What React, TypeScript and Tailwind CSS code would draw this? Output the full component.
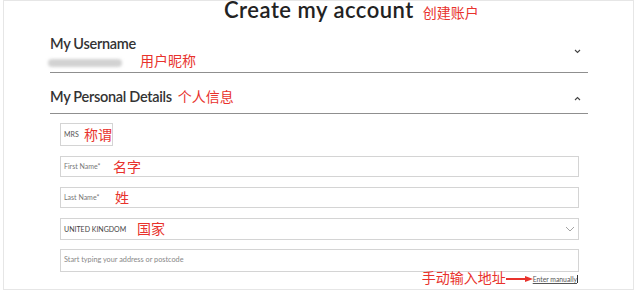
const Chevron = ({ up = false }: { up?: boolean }) => (
  <svg width="7" height="5" viewBox="0 0 7 5" className="block">
    <polyline
      points={up ? '1,4 3.5,1.5 6,4' : '1,1 3.5,3.5 6,1'}
      fill="none"
      stroke="#444"
      strokeWidth="1.1"
    />
  </svg>
)

const Note = ({ children, className = '' }: { children: React.ReactNode; className?: string }) => (
  <span className={`text-[14px] leading-[14px] text-[#e8322c] whitespace-nowrap ${className}`}>{children}</span>
)

export default function App() {
  return (
    <div className="w-[644px] h-[291px] bg-white overflow-hidden font-[family-name:Lato,'Noto_Sans_CJK_SC',sans-serif]">
      <div className="ml-[3px] w-[631px] h-[290px] border border-[#e6e6e6] flex flex-col">
        {/* title */}
        <div className="flex items-baseline h-[18px] ml-[220px]">
          <h1 className="text-[22px] leading-[18px] font-semibold tracking-[0.5px] text-[#222] whitespace-nowrap">
            Create my account
          </h1>
          <Note className="ml-[9px]">创建账户</Note>
        </div>

        <div className="ml-[46px] w-[538px] flex flex-col">
          {/* username */}
          <div className="mt-[15px] flex justify-between items-start h-[20px]">
            <h2 className="text-[14.5px] leading-[20px] font-semibold tracking-[-0.3px] text-[#333]">My Username</h2>
            <div className="mt-[15px] mr-[7px]">
              <Chevron />
            </div>
          </div>
          <div className="flex items-center h-[14px]">
            <div className="ml-[-2px] w-[74px] h-[8px] mt-[4px] rounded-full bg-[#d2d2d2] blur-[1.5px]" />
            <Note className="ml-[18px]">用户昵称</Note>
          </div>
          <div className="mt-[4px] h-px bg-[#8f8f8f]" />

          {/* personal details */}
          <div className="mt-[14px] flex justify-between items-start h-[20px]">
            <div className="flex items-baseline">
              <h2 className="text-[14.5px] leading-[20px] font-semibold tracking-[-0.3px] text-[#333]">
                My Personal Details
              </h2>
              <Note className="ml-[6px]">个人信息</Note>
            </div>
            <div className="mt-[9px] mr-[7px]">
              <Chevron up />
            </div>
          </div>
          <div className="mt-[6px] h-px bg-[#8f8f8f]" />

          {/* fields */}
          <div className="ml-[10px] w-[519px] flex flex-col">
            <div className="mt-[9px] w-[53px] h-[23px] border border-[#d4d4d4] flex items-center pl-[3px]">
              <span className="w-[21px] text-[7px] text-[#555]">MRS</span>
              <Note>称谓</Note>
            </div>
            <div className="mt-[10px] h-[21px] border border-[#d4d4d4] flex items-center pl-[3px]">
              <span className="w-[49px] text-[7px] text-[#777]">First Name*</span>
              <Note>名字</Note>
            </div>
            <div className="mt-[10px] h-[21px] border border-[#d4d4d4] flex items-center pl-[3px]">
              <span className="w-[51px] text-[7px] text-[#777]">Last Name*</span>
              <Note>姓</Note>
            </div>
            <div className="mt-[10px] h-[22px] border border-[#d4d4d4] flex items-center pl-[3px] pr-[3px]">
              <span className="w-[73px] text-[7px] text-[#444]">UNITED KINGDOM</span>
              <Note>国家</Note>
              <svg width="10" height="6" viewBox="0 0 10 6" className="ml-auto">
                <polyline points="1,1 5,5 9,1" fill="none" stroke="#999" strokeWidth="0.9" />
              </svg>
            </div>
            <div className="mt-[9px] h-[23px] border border-[#d4d4d4] flex items-center pl-[3px]">
              <span className="text-[7.3px] text-[#888]">Start typing your address or postcode</span>
            </div>
            <div className="h-[14px] flex justify-end items-center pr-[1px]">
              <Note className="-mt-[2px]">手动输入地址</Note>
              <svg width="27" height="6" viewBox="0 0 27 6">
                <line x1="0" y1="3" x2="20" y2="3" stroke="#e8322c" strokeWidth="2" />
                <polygon points="19,0 27,3 19,6" fill="#e8322c" />
              </svg>
              <span className="text-[6.8px] text-[#555] underline">Enter manually</span>
              <span className="w-px h-[8px] bg-[#333]" />
            </div>
          </div>
        </div>
      </div>
    </div>
  )
}
